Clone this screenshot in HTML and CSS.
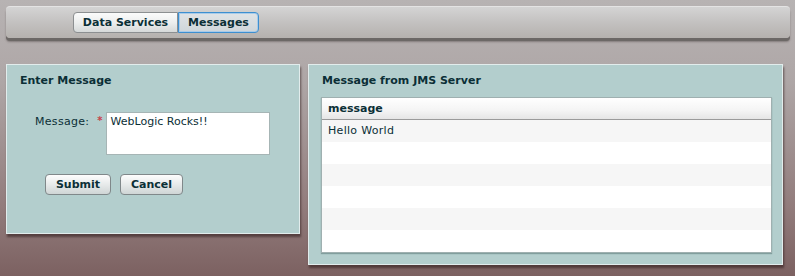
FILE: index.html
```html
<!DOCTYPE html>
<html lang="en">
<head>
    <meta charset="UTF-8">
    <title>JMS Messages</title>
    <link rel="stylesheet" href="styles.css">
</head>
<body>
    <div class="app-bar">
        <div class="tabs">
            <button class="tab">Data Services</button>
            <button class="tab active">Messages</button>
        </div>
    </div>

    <div class="panels">
        <div class="panel panel-send">
            <h3>Enter Message</h3>
            <div class="form-row">
                <label for="msg">Message:</label>
                <span class="required">*</span>
                <textarea id="msg">WebLogic Rocks!!</textarea>
            </div>
            <div class="form-buttons">
                <button class="btn btn-submit">Submit</button>
                <button class="btn btn-cancel">Cancel</button>
            </div>
        </div>

        <div class="panel panel-receive">
            <h3>Message from JMS Server</h3>
            <div class="grid">
                <div class="grid-head">message</div>
                <div class="grid-row">Hello World</div>
                <div class="grid-row"></div>
                <div class="grid-row"></div>
                <div class="grid-row"></div>
                <div class="grid-row"></div>
                <div class="grid-row"></div>
            </div>
        </div>
    </div>
</body>
</html>
```

FILE: styles.css
```css
html, body {
    height: 100%;
}
body {
    margin: 0;
    font-family: "DejaVu Sans", Verdana, sans-serif;
    font-size: 11px;
    color: #0b2f36;
    background: linear-gradient(to bottom, #b7b3b3 0%, #aea6a6 30%, #927c7c 75%, #7c6161 100%);
    overflow: hidden;
}
.app-bar {
    margin: 6px 5px 0 6px;
    height: 32px;
    border-radius: 4px;
    background: linear-gradient(to bottom, #d4d4d4 0%, #c3c1c0 50%, #b5b1ae 100%);
    border-top: 1px solid #e4e4e4;
    box-shadow: 0 3px 0 #6c6866, 0 4px 2px rgba(60, 50, 50, 0.4);
    box-sizing: border-box;
    padding-top: 5px;
}
.tabs {
    display: flex;
    margin-left: 67px;
}
.tab {
    font-family: inherit;
    font-size: 11px;
    font-weight: bold;
    color: #0b2f36;
    height: 21px;
    padding: 0;
    border: 1px solid #8c8f91;
    background: linear-gradient(to bottom, #fbfbfb 0%, #eceeee 50%, #d6d9d9 100%);
    cursor: pointer;
}
.tab:first-child {
    width: 105px;
    border-radius: 4px 0 0 4px;
}
.tab.active {
    width: 81px;
    border: 1px solid #3d8fd0;
    border-radius: 0 4px 4px 0;
    background: linear-gradient(to bottom, #dfe3e6 0%, #cfd6da 100%);
    box-shadow: inset 0 0 0 1px #a9cbe8;
}
.panels {
    display: flex;
    align-items: flex-start;
    gap: 8px;
    margin: 26px 0 0 6px;
}
.panel {
    background: #b3cecd;
    border: 1px solid #e2ecec;
    box-sizing: border-box;
    box-shadow: 1px 3px 2px rgba(50, 30, 30, 0.6);
}
.panel h3 {
    margin: 0;
    font-size: 11px;
    font-weight: bold;
    padding: 9px 0 0 13px;
    height: 22px;
}
.panel-send {
    width: 294px;
    height: 170px;
}
.form-row {
    display: flex;
    align-items: flex-start;
    margin: 16px 0 0 28px;
}
.form-row label {
    padding-top: 3px;
    letter-spacing: 0.3px;
}
.required {
    color: #c8404a;
    font-weight: bold;
    margin: 3px 0 0 8px;
    font-size: 10px;
}
textarea {
    width: 164px;
    height: 43px;
    margin-left: 3px;
    box-sizing: border-box;
    border: 1px solid #a6b5b5;
    font-family: inherit;
    font-size: 11px;
    color: #0b2f36;
    padding: 2px 4px;
    resize: none;
}
.form-buttons {
    display: flex;
    gap: 9px;
    margin: 19px 0 0 38px;
}
.btn {
    font-family: inherit;
    font-size: 11px;
    font-weight: bold;
    color: #0b2f36;
    height: 21px;
    padding: 0;
    border: 1px solid #80888a;
    border-radius: 4px;
    background: linear-gradient(to bottom, #fdfdfd 0%, #e7eaea 50%, #cfd5d5 100%);
    cursor: pointer;
}
.btn-submit {
    width: 66px;
}
.btn-cancel {
    width: 63px;
}
.panel-receive {
    width: 475px;
    height: 201px;
}
.grid {
    margin: 1px 0 0 12px;
    width: 451px;
    background: #fff;
    border: 1px solid #9fb0b0;
    box-sizing: border-box;
    box-shadow: 0 1px 1px rgba(80, 110, 110, 0.5);
}
.grid-head {
    height: 21px;
    line-height: 21px;
    padding-left: 6px;
    font-weight: bold;
    background: linear-gradient(to bottom, #ffffff 0%, #f4f4f4 60%, #e5e5e5 100%);
    border-bottom: 1px solid #9a9a9a;
}
.grid-row {
    height: 22px;
    line-height: 22px;
    padding-left: 6px;
    letter-spacing: 0.3px;
}
.grid-row:nth-child(even) {
    background: #f6f6f6;
}
```
